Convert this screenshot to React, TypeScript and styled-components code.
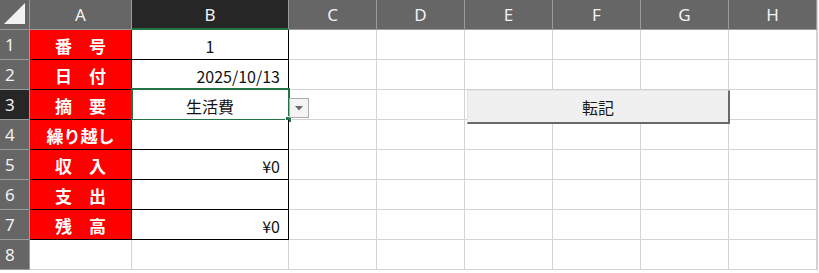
import React from "react";
import styled, { createGlobalStyle, css } from "styled-components";

const GlobalStyle = createGlobalStyle`
  html, body {
    margin: 0;
    padding: 0;
    background: #ffffff;
  }
  body {
    font-family: "Noto Sans CJK JP", "Noto Sans", sans-serif;
  }
`;

const columns = ["A", "B", "C", "D", "E", "F", "G", "H"];

type Row = {
  label: string;
  value: string;
  align: "center" | "right";
};

const rows: Row[] = [
  { label: "番　号", value: "1", align: "center" },
  { label: "日　付", value: "2025/10/13", align: "right" },
  { label: "摘　要", value: "生活費", align: "center" },
  { label: "繰り越し", value: "", align: "center" },
  { label: "収　入", value: "¥0", align: "right" },
  { label: "支　出", value: "", align: "right" },
  { label: "残　高", value: "¥0", align: "right" },
];

const SELECTED_ROW = 3;
const SELECTED_COL = "B";

export default function App() {
  return (
    <>
      <GlobalStyle />
      <Sheet>
        <Grid>
          <Corner>
            <svg width="22" height="22" viewBox="0 0 22 22">
              <polygon points="21,0 21,21 0,21" fill="#f2f2f2" />
            </svg>
          </Corner>
          {columns.map((c) => (
            <ColHeader key={c} $active={c === SELECTED_COL}>
              {c}
            </ColHeader>
          ))}

          {[1, 2, 3, 4, 5, 6, 7, 8].map((n) => {
            const row = rows[n - 1];
            return (
              <React.Fragment key={n}>
                <RowHeader $active={n === SELECTED_ROW}>{n}</RowHeader>
                {row ? (
                  <>
                    <LabelCell $last={n === rows.length}>{row.label}</LabelCell>
                    <ValueCell $align={row.align} $last={n === rows.length}>
                      {row.value}
                      {n === SELECTED_ROW && (
                        <>
                          <Selection />
                          <FillHandle />
                          <DropButton>
                            <svg width="8" height="5" viewBox="0 0 8 5">
                              <polygon points="0,0 8,0 4,4.5" fill="#6b6b6b" />
                            </svg>
                          </DropButton>
                        </>
                      )}
                    </ValueCell>
                  </>
                ) : (
                  <>
                    <Cell />
                    <Cell />
                  </>
                )}
                {columns.slice(2).map((c) => (
                  <Cell key={c} />
                ))}
              </React.Fragment>
            );
          })}
        </Grid>
        <PostButton type="button">転記</PostButton>
      </Sheet>
    </>
  );
}

const Sheet = styled.div`
  position: relative;
  width: 819px;
  height: 273px;
  overflow: hidden;
  background: #ffffff;
`;

const Grid = styled.div`
  display: grid;
  grid-template-columns: 30px 102px 157px repeat(6, 88px);
  grid-auto-rows: 30px;
  width: 817px;
  border-right: 1px solid #d4d4d4;
`;

const headerBase = css`
  box-sizing: border-box;
  display: flex;
  align-items: center;
  justify-content: center;
  color: #f2f2f2;
  font-family: "Noto Sans", "Noto Sans CJK JP", sans-serif;
  font-size: 17px;
  font-weight: 400;
`;

const Corner = styled.div`
  ${headerBase};
  background: #666666;
  border-right: 1px solid #9a9a9a;
  border-bottom: 1px solid #9a9a9a;
  align-items: flex-end;
  justify-content: flex-end;
  padding: 0 3px 4px 0;
`;

const ColHeader = styled.div<{ $active: boolean }>`
  ${headerBase};
  background: ${(p) => (p.$active ? "#262626" : "#666666")};
  border-right: 1px solid #9a9a9a;
  border-bottom: ${(p) => (p.$active ? "2px solid #217346" : "1px solid #9a9a9a")};
`;

const RowHeader = styled.div<{ $active: boolean }>`
  ${headerBase};
  justify-content: flex-start;
  padding-left: 5px;
  background: ${(p) => (p.$active ? "#262626" : "#666666")};
  border-right: 1px solid #9a9a9a;
  border-bottom: 1px solid #9a9a9a;
`;

const Cell = styled.div`
  box-sizing: border-box;
  border-right: 1px solid #d4d4d4;
  border-bottom: 1px solid #d4d4d4;
  background: #ffffff;
`;

const LabelCell = styled.div<{ $last: boolean }>`
  box-sizing: border-box;
  display: flex;
  align-items: center;
  justify-content: center;
  padding-top: 2px;
  background: #ff0000;
  color: #ffffff;
  font-size: 17px;
  font-weight: 700;
  border-right: 1px solid #000000;
  border-bottom: 1px solid #000000;
  white-space: pre;
`;

const ValueCell = styled.div<{ $align: "center" | "right"; $last: boolean }>`
  position: relative;
  box-sizing: border-box;
  display: flex;
  align-items: center;
  justify-content: ${(p) => (p.$align === "right" ? "flex-end" : "center")};
  padding: 2px 8px 0 8px;
  background: #ffffff;
  color: #111111;
  font-size: 16px;
  border-right: 1px solid #000000;
  border-bottom: 1px solid #000000;
`;

const Selection = styled.div`
  position: absolute;
  left: -1px;
  top: -2px;
  right: -2px;
  bottom: -2px;
  border: 2px solid #217346;
  pointer-events: none;
`;

const FillHandle = styled.div`
  position: absolute;
  right: -4px;
  bottom: -4px;
  width: 5px;
  height: 5px;
  background: #217346;
  border: 1px solid #ffffff;
`;

const DropButton = styled.div`
  position: absolute;
  left: calc(100% + 1px);
  top: 8px;
  width: 20px;
  height: 20px;
  box-sizing: border-box;
  display: flex;
  align-items: center;
  justify-content: center;
  background: #f4f4f4;
  border: 1px solid #acacac;
`;

const PostButton = styled.button`
  position: absolute;
  left: 467px;
  top: 90px;
  width: 263px;
  height: 34px;
  box-sizing: border-box;
  margin: 0;
  padding: 0;
  background: #f0f0f0;
  border: none;
  border-top: 1px solid #e3e3e3;
  border-left: 1px solid #e3e3e3;
  border-right: 2px solid #696969;
  border-bottom: 2px solid #696969;
  color: #1a1a1a;
  font-family: "Noto Sans CJK JP", sans-serif;
  font-size: 16px;
  font-weight: 400;
`;
